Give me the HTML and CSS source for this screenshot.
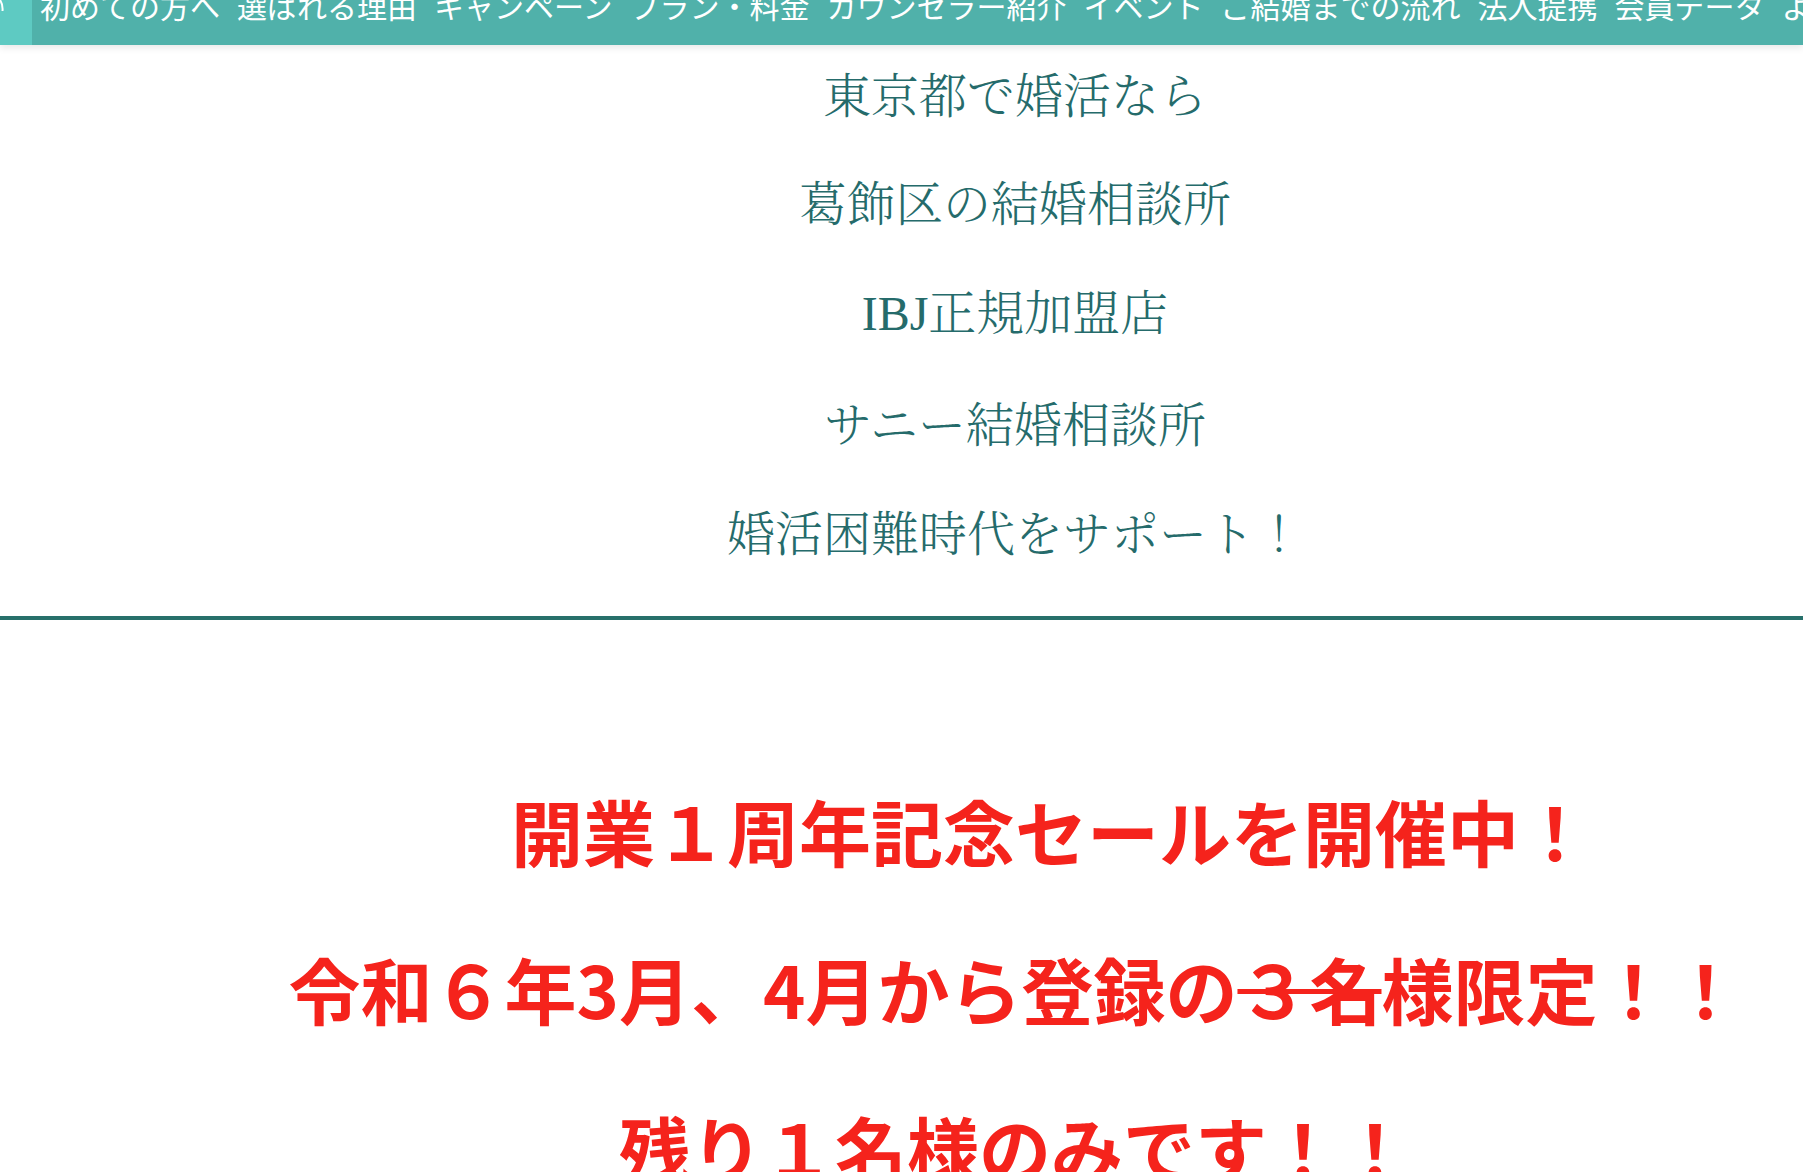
FILE: index.html
```html
<!DOCTYPE html>
<html lang="ja">
<head>
<meta charset="utf-8">
<title>サニー結婚相談所</title>
<link rel="stylesheet" href="styles.css">
</head>
<body>
<div class="page">
  <header class="navbar">
    <div class="nav-home">
      <svg class="nav-home-mark" width="6" height="12" viewBox="0 0 6 12"><path d="M0 0 C2 3 3 6 2.5 11" stroke="#fff" stroke-width="2" fill="none"/></svg>
    </div>
    <nav class="nav-list">
      <a class="nav-item">初めての方へ</a>
      <a class="nav-item">選ばれる理由</a>
      <a class="nav-item">キャンペーン</a>
      <a class="nav-item">プラン・料金</a>
      <a class="nav-item">カウンセラー紹介</a>
      <a class="nav-item">イベント</a>
      <a class="nav-item">ご結婚までの流れ</a>
      <a class="nav-item">法人提携</a>
      <a class="nav-item">会員データ</a>
      <a class="nav-item">よくある質問</a>
    </nav>
  </header>

  <section class="hero">
    <p class="hero-line">東京都で婚活なら</p>
    <p class="hero-line">葛飾区の結婚相談所</p>
    <p class="hero-line"><span class="latin">IBJ</span>正規加盟店</p>
    <p class="hero-line">サニー結婚相談所</p>
    <p class="hero-line">婚活困難時代をサポート！</p>
  </section>

  <hr class="divider">

  <section class="campaign">
    <p class="campaign-line">　開業１周年記念セールを開催中！</p>
    <p class="campaign-line">令和６年3月、4月から登録の<s>３名</s>様限定！！</p>
    <p class="campaign-line">残り１名様のみです！！</p>
  </section>
</div>
</body>
</html>
```

FILE: styles.css
```css
html, body {
  margin: 0;
  padding: 0;
  background: #ffffff;
}

.page {
  height: 100vh;
  overflow: hidden;
  font-family: "Noto Sans CJK JP", "Noto Sans", sans-serif;
}

/* ---------- navigation bar ---------- */
.navbar {
  display: flex;
  height: 45px;
  background: #50b1aa;
  overflow: hidden;
  box-shadow: 0 3px 7px rgba(0, 0, 0, 0.09);
  position: relative;
  z-index: 1;
}

.nav-home {
  flex: 0 0 32px;
  background: #5ecac2;
}

.nav-home-mark {
  display: block;
}

.nav-list {
  display: flex;
  gap: 17px;
  padding-left: 8px;
  margin-top: -10px;
  white-space: nowrap;
}

.nav-item {
  color: #ffffff;
  font-size: 30px;
  line-height: 30px;
  font-weight: 400;
  text-decoration: none;
}

/* ---------- hero heading ---------- */
.hero {
  display: flex;
  flex-direction: column;
  gap: 48.4px;
  padding: 18px 0 0 227px;
  font-family: "Noto Serif CJK JP", "IPAexMincho", "IPAMincho", "Noto Sans CJK JP", serif;
  font-weight: 300;
  color: #256b6b;
}

.hero-line {
  margin: 0;
  font-size: 48px;
  line-height: 60px;
  text-align: center;
}

.latin {
  font-family: "Liberation Serif", serif;
  font-weight: 400;
}

.divider {
  margin: 55px 0 0;
  border: 0;
  height: 4px;
  background: #27706b;
}

/* ---------- campaign ---------- */
.campaign {
  display: flex;
  flex-direction: column;
  gap: 78.5px;
  padding: 170px 0 0 227px;
  color: #f5231c;
}

.campaign-line {
  margin: 0;
  font-size: 72px;
  line-height: 80px;
  font-weight: 700;
  text-align: center;
  white-space: nowrap;
}

.campaign-line s {
  text-decoration-thickness: 5px;
}
```
